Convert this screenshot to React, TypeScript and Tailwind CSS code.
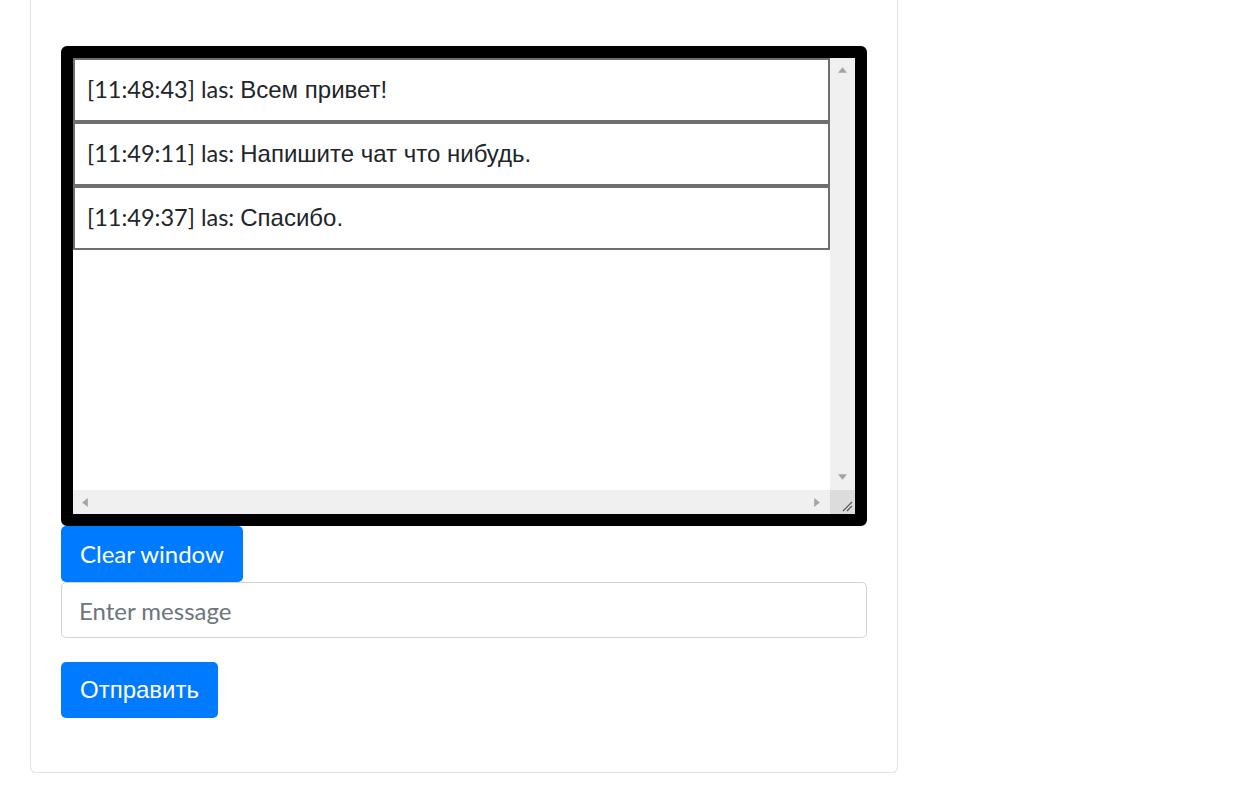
import React from 'react'

const messages = [
  { time: '11:48:43', user: 'las', text: 'Всем привет!' },
  { time: '11:49:11', user: 'las', text: 'Напишите чат что нибудь.' },
  { time: '11:49:37', user: 'las', text: 'Спасибо.' },
]

const cyr = { fontFamily: "'Liberation Sans', sans-serif" }

function Tri({ dir }: { dir: 'up' | 'down' | 'left' | 'right' }) {
  const paths = {
    up: '0,5 4,0 8,5',
    down: '0,0 8,0 4,5',
    left: '5,0 5,8 0,4',
    right: '0,0 0,8 5,4',
  }
  const vertical = dir === 'up' || dir === 'down'
  return (
    <svg width={vertical ? 9 : 6} height={vertical ? 6 : 9} viewBox={vertical ? '0 0 8 5' : '0 0 5 8'}>
      <polygon points={paths[dir]} fill="#a3a3a3" />
    </svg>
  )
}

export default function App() {
  return (
    <div className="min-h-screen bg-white" style={{ fontFamily: "Lato, 'Liberation Sans', sans-serif" }}>
      <div className="ml-[30px] w-[868px] border-x border-b border-[#dee2e6] rounded-b-[6px] px-[30px] pt-[46px] pb-[54px]">
        {/* chat window */}
        <div className="h-[480px] border-[12px] border-black rounded-[6px] bg-white flex flex-col">
          <div className="flex flex-1 min-h-0">
            <div className="flex-1 flex flex-col">
              {messages.map((m) => (
                <div
                  key={m.time}
                  className="h-[64px] border-2 border-[#6f6f6f] flex items-center pl-[12px] text-[23.5px] text-[#212529] whitespace-pre"
                >
                  [{m.time}] {m.user}: <span style={cyr} className="text-[24px]">{m.text}</span>
                </div>
              ))}
            </div>
            <div className="w-[25px] bg-[#f0f0f0] flex flex-col items-center justify-between pt-[9px] pb-[10px]">
              <Tri dir="up" />
              <Tri dir="down" />
            </div>
          </div>
          <div className="flex h-[24px]">
            <div className="flex-1 bg-[#f0f0f0] flex items-center justify-between pl-[9px] pr-[10px]">
              <Tri dir="left" />
              <Tri dir="right" />
            </div>
            <div className="w-[25px] bg-[#dcdcdc] flex items-end justify-end pr-[2px] pb-[2px]">
              <svg width="12" height="12" viewBox="0 0 12 12">
                <line x1="2" y1="11" x2="11" y2="2" stroke="#555" strokeWidth="1.2" />
                <line x1="6" y1="11" x2="11" y2="6" stroke="#555" strokeWidth="1.2" />
              </svg>
            </div>
          </div>
        </div>

        <button className="block h-[56px] px-[19px] bg-[#007bff] text-white text-[24px] rounded-[5px]">
          Clear window
        </button>

        <input
          placeholder="Enter message"
          className="block w-full h-[56px] px-[17px] border border-[#ced4da] rounded-[5px] text-[24px] text-[#495057] placeholder:text-[#6c757d] outline-none"
        />

        <button
          style={cyr}
          className="block mt-[24px] h-[56px] px-[19px] bg-[#007bff] text-white text-[24px] rounded-[5px]"
        >
          Отправить
        </button>
      </div>
    </div>
  )
}
